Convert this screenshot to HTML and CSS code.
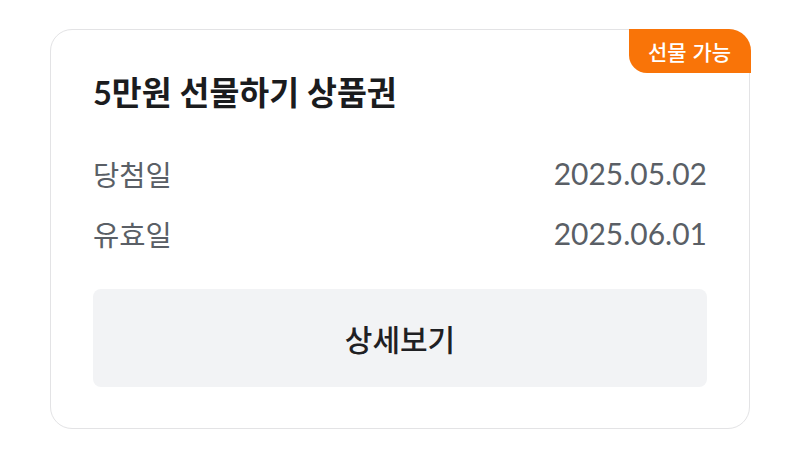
FILE: index.html
```html
<!DOCTYPE html>
<html lang="ko">
<head>
<meta charset="utf-8">
<link rel="stylesheet" href="styles.css">
</head>
<body>
<div class="card">
  <span class="badge">선물 가능</span>
  <h1 class="title">5만원 선물하기 상품권</h1>
  <div class="rows">
    <div class="row"><span class="label">당첨일</span><span class="value">2025.05.02</span></div>
    <div class="row"><span class="label">유효일</span><span class="value">2025.06.01</span></div>
  </div>
  <button class="detail">상세보기</button>
</div>
</body>
</html>
```
FILE: styles.css
```css
* { box-sizing: border-box; }
html, body { margin: 0; padding: 0; background: #ffffff; }
body {
  font-family: Lato, "Noto Sans CJK KR", sans-serif;
  width: 800px;
  height: 449px;
  overflow: hidden;
}
.card {
  position: relative;
  margin: 29px 0 0 50px;
  width: 700px;
  height: 400px;
  border: 1.5px solid #e3e3e5;
  border-radius: 22px;
  padding: 41px 42px 0 42px;
  display: flex;
  flex-direction: column;
}
.badge {
  position: absolute;
  top: -1.5px;
  right: -1.5px;
  width: 122px;
  height: 44px;
  background: #f97408;
  color: #ffffff;
  font-family: "Noto Sans CJK KR", sans-serif;
  font-size: 21px;
  font-weight: 500;
  display: flex;
  align-items: center;
  justify-content: center;
  border-radius: 0 22px 0 18px;
}
.title {
  margin: 0;
  font-size: 32.5px;
  line-height: 44px;
  font-weight: 700;
  color: #1b1c1e;
}
.rows {
  margin-top: 40px;
  display: flex;
  flex-direction: column;
  gap: 24px;
}
.row {
  display: flex;
  justify-content: space-between;
  align-items: center;
  height: 36px;
  font-size: 28.5px;
  color: #5a5f66;
}
.value { font-size: 30px; }
.detail {
  margin-top: 37.5px;
  height: 98px;
  width: 100%;
  flex: none;
  border: none;
  border-radius: 8px;
  background: #f2f3f5;
  font-family: "Noto Sans CJK KR", sans-serif;
  font-size: 30px;
  font-weight: 500;
  color: #1f2023;
  padding: 0;
}
```
